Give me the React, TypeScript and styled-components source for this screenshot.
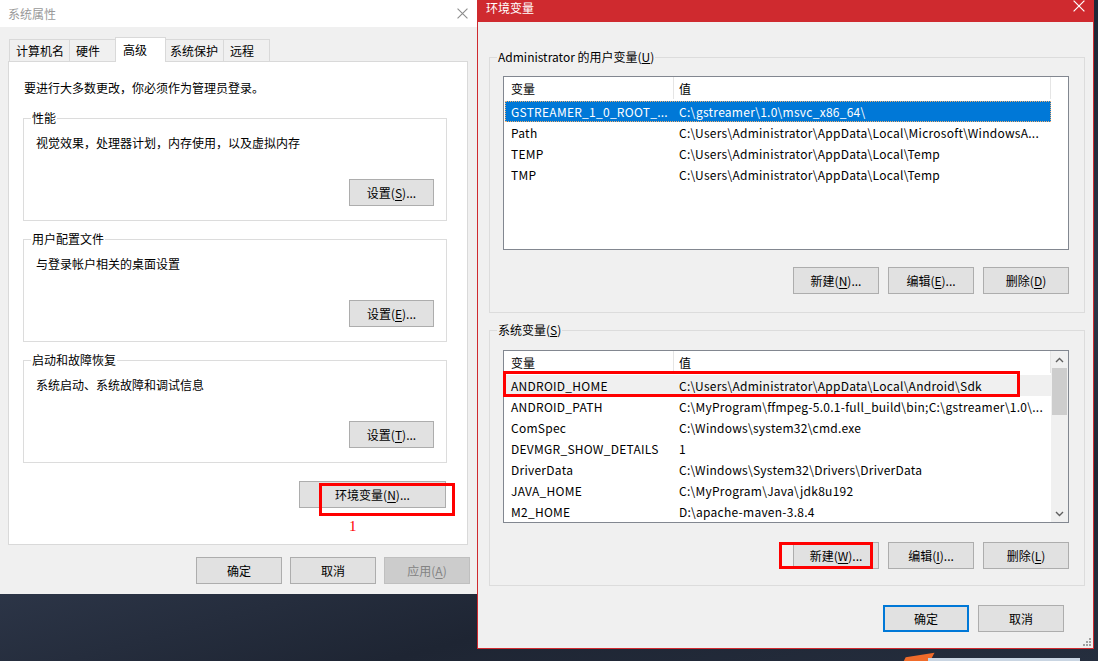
import React from "react";
import styled, { createGlobalStyle, css } from "styled-components";

const GlobalStyle = createGlobalStyle`
  html, body { margin: 0; padding: 0; }
  body {
    font-family: "Noto Sans CJK SC", "Noto Sans", sans-serif;
    font-size: 12px;
    color: #000;
  }
`;

const userVars = [
  ["GSTREAMER_1_0_ROOT_...", "C:\\gstreamer\\1.0\\msvc_x86_64\\"],
  ["Path", "C:\\Users\\Administrator\\AppData\\Local\\Microsoft\\WindowsA..."],
  ["TEMP", "C:\\Users\\Administrator\\AppData\\Local\\Temp"],
  ["TMP", "C:\\Users\\Administrator\\AppData\\Local\\Temp"],
];

const sysVars = [
  ["ANDROID_HOME", "C:\\Users\\Administrator\\AppData\\Local\\Android\\Sdk"],
  ["ANDROID_PATH", "C:\\MyProgram\\ffmpeg-5.0.1-full_build\\bin;C:\\gstreamer\\1.0\\..."],
  ["ComSpec", "C:\\Windows\\system32\\cmd.exe"],
  ["DEVMGR_SHOW_DETAILS", "1"],
  ["DriverData", "C:\\Windows\\System32\\Drivers\\DriverData"],
  ["JAVA_HOME", "C:\\MyProgram\\Java\\jdk8u192"],
  ["M2_HOME", "D:\\apache-maven-3.8.4"],
];

const tabs = ["计算机名", "硬件", "高级", "系统保护", "远程"];

// desktop + windows

const Desktop = styled.div`
  position: relative;
  width: 1098px;
  height: 661px;
  overflow: hidden;
  background: linear-gradient(165deg, #1a212e 0%, #202838 40%, #2c3547 62%, #1e2533 80%, #252e3e 100%);
`;

const SysWindow = styled.div`
  position: absolute;
  left: 0;
  top: 0;
  width: 478px;
  height: 594px;
  background: #f0f0f0;
  display: flex;
  flex-direction: column;
`;

const EnvWindow = styled.div`
  position: absolute;
  left: 477px;
  top: 0;
  width: 617px;
  height: 649px;
  box-sizing: border-box;
  border: 1px solid #cf2a2f;
  border-top: none;
  background: #f0f0f0;
  display: flex;
  flex-direction: column;
`;

const TitleBar = styled.div<{ $accent?: boolean }>`
  flex: none;
  display: flex;
  justify-content: space-between;
  ${(p) =>
    p.$accent
      ? css`
          height: 22px;
          align-items: flex-start;
          padding-left: 8px;
          background: #cf2a2f;
          color: #fff;
        `
      : css`
          height: 27px;
          align-items: center;
          padding-left: 8px;
          background: #fff;
          color: #999;
        `}
`;

const TitleText = styled.span`
  line-height: 16px;
`;

const CloseBox = styled.span<{ $accent?: boolean }>`
  display: flex;
  margin-right: ${(p) => (p.$accent ? 8 : 10)}px;
`;

const CloseIcon = ({ color, size }: { color: string; size: number }) => (
  <svg width={size} height={size} viewBox="0 0 10 10">
    <path d="M0.5 0.5 L9.5 9.5 M9.5 0.5 L0.5 9.5" stroke={color} strokeWidth="1" fill="none" />
  </svg>
);

// left dialog parts

const SysBody = styled.div`
  flex: 1;
  display: flex;
  flex-direction: column;
`;

const TabStrip = styled.div`
  display: flex;
  align-items: flex-end;
  height: 24px;
  margin: 10px 0 0 9px;
`;

const Tab = styled.div<{ $active?: boolean }>`
  box-sizing: border-box;
  display: flex;
  align-items: center;
  height: 22px;
  min-width: 47px;
  padding: 0 5px 0 6px;
  margin-left: -1px;
  border: 1px solid #d9d9d9;
  border-bottom: none;
  background: #f0f0f0;
  &:first-child { margin-left: 0; }
  ${(p) =>
    p.$active &&
    css`
      position: relative;
      z-index: 1;
      height: 25px;
      min-width: 51px;
      padding: 0 7px 2px;
      margin: 0 -2px -1px -1px;
      background: #fff;
    `}
`;

const TabPane = styled.div`
  box-sizing: border-box;
  width: 460px;
  height: 484px;
  margin-left: 8px;
  padding: 18px 20px 0 14px;
  border: 1px solid #d9d9d9;
  background: #fff;
  display: flex;
  flex-direction: column;
`;

const Intro = styled.div`
  line-height: 16px;
  padding-left: 1px;
  margin-bottom: 14px;
`;

const Group = styled.fieldset<{ $gap?: number }>`
  margin: ${(p) => p.$gap ?? 0}px 0 0 0;
  padding: 0;
  min-width: 0;
  border: 1px solid #dcdcdc;
`;

const Legend = styled.legend`
  padding: 0 1px;
  margin-left: 7px;
  line-height: 16px;
`;

const GroupBody = styled.div<{ $pad: string }>`
  padding: ${(p) => p.$pad};
  display: flex;
  flex-direction: column;
`;

const GroupText = styled.div`
  line-height: 16px;
`;

const ButtonRow = styled.div<{ $top: number; $right?: number; $gap?: number }>`
  display: flex;
  justify-content: flex-end;
  gap: ${(p) => p.$gap ?? 9}px;
  margin-top: ${(p) => p.$top}px;
  margin-right: ${(p) => p.$right ?? 0}px;
`;

const Btn = styled.button<{ $w?: number; $default?: boolean }>`
  box-sizing: border-box;
  width: ${(p) => p.$w ?? 86}px;
  height: 27px;
  padding: 0;
  background: #e1e1e1;
  border: 1px solid #adadad;
  font: inherit;
  color: #000;
  line-height: 16px;
  ${(p) =>
    p.$default &&
    css`
      border: 2px solid #0078d7;
    `}
  &:disabled {
    background: #cccccc;
    border-color: #bfbfbf;
    color: #838383;
  }
  u { text-underline-offset: 2px; }
`;

const Marked = styled.div`
  position: relative;
`;

const RedMark = styled.div<{ $l: number; $t: number; $w: number; $h: number }>`
  position: absolute;
  left: ${(p) => p.$l}px;
  top: ${(p) => p.$t}px;
  width: ${(p) => p.$w}px;
  height: ${(p) => p.$h}px;
  box-sizing: border-box;
  border: 3px solid #ff0000;
  pointer-events: none;
  z-index: 2;
`;

const StepNumber = styled.span`
  position: absolute;
  left: 50px;
  top: 37px;
  font-family: "Liberation Serif", serif;
  font-size: 15px;
  color: #ff0000;
`;

// right dialog parts

const EnvBody = styled.div`
  flex: 1;
  display: flex;
  flex-direction: column;
  padding: 0 8px 0 11px;
`;

const ListView = styled.div<{ $h: number }>`
  position: relative;
  box-sizing: border-box;
  height: ${(p) => p.$h}px;
  border: 1px solid #828790;
  background: #fff;
  display: flex;
`;

const ListMain = styled.div`
  width: 547px;
  display: flex;
  flex-direction: column;
`;

const HeaderRow = styled.div`
  display: flex;
  height: 22px;
  flex: none;
`;

const HeaderCell = styled.div<{ $w: number; $pl: number }>`
  box-sizing: border-box;
  width: ${(p) => p.$w}px;
  padding-left: ${(p) => p.$pl}px;
  border-right: 1px solid #e5e5e5;
  display: flex;
  align-items: center;
`;

const Rows = styled.div`
  margin-top: 2px;
  display: flex;
  flex-direction: column;
`;

const Row = styled.div<{ $state?: "selected" | "hover" }>`
  box-sizing: border-box;
  display: flex;
  align-items: center;
  height: 21px;
  width: 546px;
  margin-left: 1px;
  padding-bottom: 1px;
  white-space: nowrap;
  ${(p) =>
    p.$state === "selected" &&
    css`
      background: #0078d7;
      color: #fff;
      outline: 1px dotted #f3b070;
      outline-offset: -1px;
    `}
  ${(p) =>
    p.$state === "hover" &&
    css`
      background: #f0f0f0;
    `}
`;

const Cell = styled.div<{ $w?: number; $pl: number }>`
  box-sizing: border-box;
  ${(p) => (p.$w ? `width: ${p.$w}px; flex: none;` : "flex: 1;")}
  padding-left: ${(p) => p.$pl}px;
  letter-spacing: 0.26px;
  overflow: hidden;
`;

const ScrollBar = styled.div`
  width: 17px;
  margin-left: auto;
  background: #f0f0f0;
  display: flex;
  flex-direction: column;
`;

const ScrollArrow = styled.div`
  height: 17px;
  display: flex;
  align-items: center;
  justify-content: center;
`;

const ScrollTrack = styled.div`
  flex: 1;
`;

const Thumb = styled.div`
  height: 47px;
  margin: 0 1px;
  background: #cdcdcd;
`;

const Chevron = ({ up }: { up?: boolean }) => (
  <svg width="9" height="6" viewBox="0 0 9 6">
    <polyline
      points={up ? "1,5 4.5,1.5 8,5" : "1,1 4.5,4.5 8,1"}
      fill="none"
      stroke="#606060"
      strokeWidth="1.4"
    />
  </svg>
);

const Grip = styled.svg`
  position: absolute;
  right: 2px;
  bottom: 2px;
`;

const OrangeFlag = styled.div`
  position: absolute;
  left: 904px;
  top: 655px;
  width: 26px;
  height: 12px;
  background: #f06b2a;
  transform: skewX(-35deg) rotate(-10deg);
`;

const PaleBar = styled.div`
  position: absolute;
  left: 928px;
  top: 658px;
  width: 152px;
  height: 6px;
  background: #c9d5e2;
`;

const Key = ({ label, k, tail = "" }: { label: string; k: string; tail?: string }) => (
  <>
    {label}(<u>{k}</u>){tail}
  </>
);

const VarList = ({
  rows,
  height,
  scroll,
  states,
}: {
  rows: string[][];
  height: number;
  scroll?: boolean;
  states: Record<number, "selected" | "hover">;
}) => (
  <ListView $h={height}>
    <ListMain>
      <HeaderRow>
        <HeaderCell $w={170} $pl={7}>变量</HeaderCell>
        <HeaderCell $w={377} $pl={5}>值</HeaderCell>
      </HeaderRow>
      <Rows>
        {rows.map(([name, value], i) => (
          <Row key={name} $state={states[i]}>
            <Cell $w={169} $pl={6}>{name}</Cell>
            <Cell $pl={5}>{value}</Cell>
          </Row>
        ))}
      </Rows>
    </ListMain>
    {scroll && (
      <ScrollBar>
        <ScrollArrow><Chevron up /></ScrollArrow>
        <ScrollTrack><Thumb /></ScrollTrack>
        <ScrollArrow><Chevron /></ScrollArrow>
      </ScrollBar>
    )}
  </ListView>
);

const sysGroups = [
  { title: "性能", text: "视觉效果，处理器计划，内存使用，以及虚拟内存", k: "S" },
  { title: "用户配置文件", text: "与登录帐户相关的桌面设置", k: "E" },
  { title: "启动和故障恢复", text: "系统启动、系统故障和调试信息", k: "T" },
];

export default function App() {
  return (
    <>
      <GlobalStyle />
      <Desktop>
        <OrangeFlag />
        <PaleBar />

        <SysWindow>
          <TitleBar>
            <TitleText>系统属性</TitleText>
            <CloseBox>
              <CloseIcon color="#8c8c8c" size={11} />
            </CloseBox>
          </TitleBar>
          <SysBody>
            <TabStrip>
              {tabs.map((t) => (
                <Tab key={t} $active={t === "高级"}>{t}</Tab>
              ))}
            </TabStrip>
            <TabPane>
              <Intro>要进行大多数更改，你必须作为管理员登录。</Intro>
              {sysGroups.map((g, i) => (
                <Group key={g.title} $gap={i === 0 ? 0 : 10}>
                  <Legend>{g.title}</Legend>
                  <GroupBody $pad="9px 12px 14px 12px">
                    <GroupText>{g.text}</GroupText>
                    <ButtonRow $top={28}>
                      <Btn $w={85}>
                        <Key label="设置" k={g.k} tail="..." />
                      </Btn>
                    </ButtonRow>
                  </GroupBody>
                </Group>
              ))}
              <ButtonRow $top={18} $right={1}>
                <Marked>
                  <Btn $w={147}>
                    <Key label="环境变量" k="N" tail="..." />
                  </Btn>
                  <RedMark $l={20} $t={2} $w={136} $h={33} />
                  <StepNumber>1</StepNumber>
                </Marked>
              </ButtonRow>
            </TabPane>
            <ButtonRow $top={12} $right={8} $gap={8}>
              <Btn>确定</Btn>
              <Btn>取消</Btn>
              <Btn disabled>
                <Key label="应用" k="A" />
              </Btn>
            </ButtonRow>
          </SysBody>
        </SysWindow>

        <EnvWindow>
          <TitleBar $accent>
            <TitleText>环境变量</TitleText>
            <CloseBox $accent>
              <CloseIcon color="#ffffff" size={12} />
            </CloseBox>
          </TitleBar>
          <EnvBody>
            <Group $gap={27}>
              <Legend>
                Administrator 的用户变量(<u>U</u>)
              </Legend>
              <GroupBody $pad="11px 15px 18px 13px">
                <VarList rows={userVars} height={174} states={{ 0: "selected" }} />
                <ButtonRow $top={17}>
                  <Btn><Key label="新建" k="N" tail="..." /></Btn>
                  <Btn><Key label="编辑" k="E" tail="..." /></Btn>
                  <Btn><Key label="删除" k="D" /></Btn>
                </ButtonRow>
              </GroupBody>
            </Group>

            <Group $gap={9}>
              <Legend>
                系统变量(<u>S</u>)
              </Legend>
              <GroupBody $pad="12px 15px 16px 13px">
                <Marked>
                  <VarList rows={sysVars} height={173} scroll states={{ 0: "hover" }} />
                  <RedMark $l={0} $t={21} $w={517} $h={26} />
                </Marked>
                <ButtonRow $top={19}>
                  <Marked>
                    <Btn><Key label="新建" k="W" tail="..." /></Btn>
                    <RedMark $l={-14} $t={0} $w={94} $h={27} />
                  </Marked>
                  <Btn><Key label="编辑" k="I" tail="..." /></Btn>
                  <Btn><Key label="删除" k="L" /></Btn>
                </ButtonRow>
              </GroupBody>
            </Group>

            <ButtonRow $top={19} $right={21}>
              <Btn $default>确定</Btn>
              <Btn>取消</Btn>
            </ButtonRow>
          </EnvBody>
          <Grip width="8" height="8" viewBox="0 0 8 8">
            {[
              [6, 0], [6, 3], [3, 3], [6, 6], [3, 6], [0, 6],
            ].map(([x, y]) => (
              <rect key={`${x}-${y}`} x={x} y={y} width="2" height="2" fill="#a0a0a0" />
            ))}
          </Grip>
        </EnvWindow>
      </Desktop>
    </>
  );
}
